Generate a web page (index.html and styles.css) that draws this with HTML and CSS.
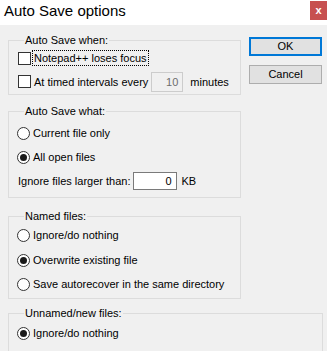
FILE: index.html
```html
<!DOCTYPE html>
<html>
<head>
<meta charset="utf-8">
<link rel="stylesheet" href="styles.css">
</head>
<body>
<div class="titlebar">
  <span class="title">Auto Save options</span>
  <span class="close">x</span>
</div>
<div class="client">
  <div class="top">
    <div class="left">
      <fieldset class="group g1">
        <legend>Auto Save when:</legend>
        <div class="row r1"><span class="check"></span><span class="lbl focus">Notepad++ loses focus</span></div>
        <div class="row r2"><span class="check"></span><span class="lbl">At timed intervals every</span><span class="edit disabled">10</span><span class="lbl">minutes</span></div>
      </fieldset>
      <fieldset class="group g2">
        <legend>Auto Save what:</legend>
        <div class="row rr"><span class="radio"></span><span class="lbl">Current file only</span></div>
        <div class="row rr"><span class="radio on"></span><span class="lbl">All open files</span></div>
        <div class="row rr"><span class="plain">Ignore files larger than:</span><span class="edit size">0</span><span class="lbl">KB</span></div>
      </fieldset>
      <fieldset class="group g3">
        <legend>Named files:</legend>
        <div class="row n1"><span class="radio"></span><span class="lbl">Ignore/do nothing</span></div>
        <div class="row n2"><span class="radio on"></span><span class="lbl">Overwrite existing file</span></div>
        <div class="row n3"><span class="radio"></span><span class="lbl">Save autorecover in the same directory</span></div>
      </fieldset>
    </div>
    <div class="buttons">
      <div class="btn default">OK</div>
      <div class="btn">Cancel</div>
    </div>
  </div>
  <fieldset class="group g4">
    <legend>Unnamed/new files:</legend>
    <div class="row rr"><span class="radio on"></span><span class="lbl">Ignore/do nothing</span></div>
    <div class="row rr"><span class="radio"></span><span class="lbl">Save to autorecover directory</span></div>
  </fieldset>
</div>
</body>
</html>
```
FILE: styles.css
```css
html, body {
  margin: 0;
  padding: 0;
  background: #f0f0f0;
  overflow: hidden;
}
body {
  width: 327px;
  height: 351px;
  font-family: "Liberation Sans", Arial, sans-serif;
  font-size: 11px;
  color: #000;
  white-space: nowrap;
}
.titlebar {
  height: 25px;
  background: #fff;
  display: flex;
  justify-content: space-between;
  align-items: flex-start;
}
.title {
  font-size: 15px;
  line-height: 20px;
  margin-left: 4px;
  margin-top: 1px;
}
.close {
  width: 17px;
  height: 19px;
  margin-top: 1px;
  background: #c75050;
  color: #fff;
  font-weight: bold;
  font-size: 11px;
  line-height: 18px;
  text-align: center;
}
.client {
  padding-left: 8px;
}
.top {
  display: flex;
}
.left {
  width: 233px;
  flex: none;
}
.group {
  margin: 0;
  padding: 0 0 0 8px;
  border: 1px solid #dcdcdc;
  min-width: 0;
}
.group legend {
  padding: 0 1px;
  margin-left: 7px;
  line-height: 14px;
  height: 14px;
}
.g1 { margin-top: 8px; }
.g2 { margin-top: 9px; padding-top: 3px; padding-bottom: 4px; }
.g3 { margin-top: 11px; padding-bottom: 3px; }
.g4 { margin-top: 7px; width: 305px; padding-top: 1px; padding-bottom: 10px; }
.row {
  display: flex;
  align-items: center;
}
.r1 { height: 22px; }
.r2 { height: 25px; }
.rr { height: 24px; }
.n1 { height: 24px; }
.n2 { height: 26px; }
.n3 { height: 22px; }
.check {
  width: 11px;
  height: 11px;
  border: 1px solid #333;
  background: #fff;
  margin-left: 1px;
  flex: none;
}
.radio {
  width: 11px;
  height: 11px;
  border: 1px solid #333;
  border-radius: 50%;
  background: #fff;
  flex: none;
  position: relative;
}
.radio.on::after {
  content: "";
  position: absolute;
  left: 2px;
  top: 2px;
  width: 7px;
  height: 7px;
  border-radius: 50%;
  background: #1a1a1a;
}
.lbl {
  margin-left: 3px;
  line-height: 14px;
}
.focus {
  outline: 1px dotted #000;
  outline-offset: 0;
  padding: 0 1px;
  margin-left: 2px;
}
.plain {
  margin-left: 1px;
}
.edit {
  box-sizing: border-box;
  text-align: right;
  padding-right: 4px;
  flex: none;
}
.edit.disabled {
  width: 32px;
  height: 20px;
  margin-left: 3px;
  margin-right: 4px;
  border: 1px solid #cccccc;
  color: #6d6d6d;
  background: #f0f0f0;
  line-height: 18px;
}
.edit.size {
  width: 44px;
  height: 18px;
  margin-left: 2px;
  margin-right: 2px;
  border: 1px solid #7a7a7a;
  background: #fff;
  line-height: 16px;
}
.buttons {
  margin-left: 8px;
  padding-top: 12px;
  display: flex;
  flex-direction: column;
  gap: 9px;
}
.btn {
  box-sizing: border-box;
  width: 73px;
  height: 19px;
  border: 1px solid #adadad;
  background: #e1e1e1;
  text-align: center;
  line-height: 17px;
}
.btn.default {
  border: 2px solid #0078d7;
  line-height: 15px;
}
```
